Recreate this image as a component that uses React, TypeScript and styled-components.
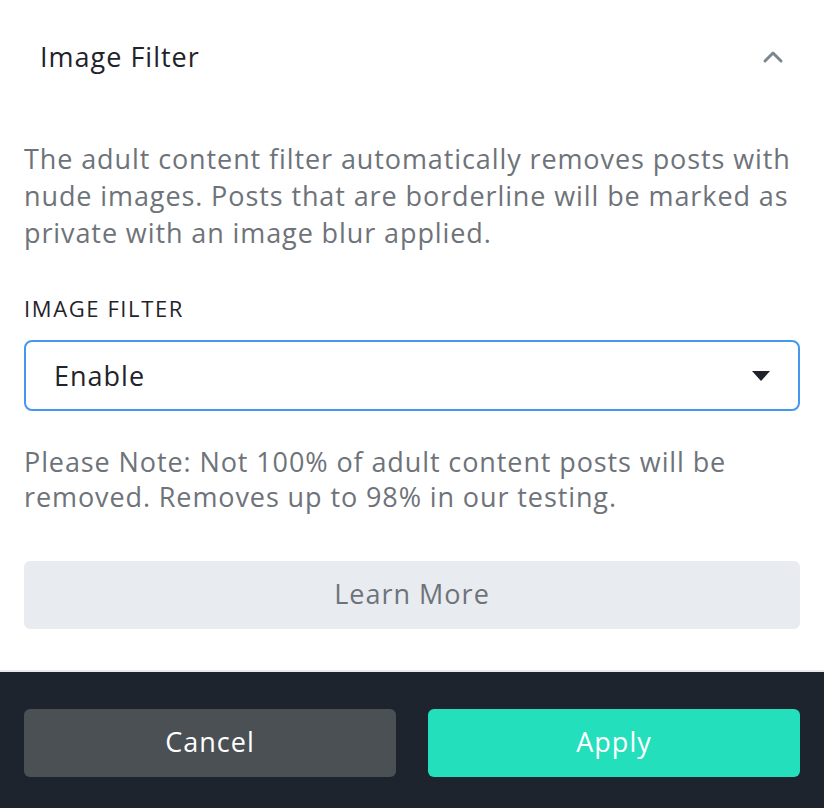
import React from 'react';
import styled, { createGlobalStyle } from 'styled-components';

const GlobalStyle = createGlobalStyle`
  html, body {
    margin: 0;
    padding: 0;
    background: #ffffff;
  }
  body {
    font-family: 'Open Sans', 'Liberation Sans', sans-serif;
  }
`;

const Panel = styled.div`
  width: 824px;
  height: 808px;
  display: flex;
  flex-direction: column;
  background: #ffffff;
`;

const Header = styled.div`
  display: flex;
  align-items: center;
  justify-content: space-between;
  height: 114px;
  padding: 0 40px 0 40px;
  box-sizing: border-box;
`;

const HeaderTitle = styled.h2`
  margin: 0 0 2px 0;
  font-size: 27px;
  font-weight: 500;
  color: #1f232a;
  letter-spacing: 1px;
`;

const Body = styled.div`
  flex: 1;
  padding: 26px 24px 0 24px;
  display: flex;
  flex-direction: column;
  border-bottom: 2px solid #e6e9ed;
`;

const Paragraph = styled.p<{ $lh: number }>`
  margin: 0;
  font-size: 27px;
  line-height: ${(p) => p.$lh}px;
  color: #6e737a;
  letter-spacing: 0.9px;
`;

const Label = styled.div`
  margin-top: 42px;
  font-size: 22px;
  font-weight: 500;
  color: #1f232a;
  letter-spacing: 1.6px;
`;

const Select = styled.div`
  margin-top: 17px;
  height: 71px;
  box-sizing: border-box;
  border: 2px solid #4597ef;
  border-radius: 8px;
  display: flex;
  align-items: center;
  justify-content: space-between;
  padding: 0 28px 0 28px;
  font-size: 27px;
  color: #1f232a;
  letter-spacing: 1px;
`;

const Note = styled(Paragraph)`
  margin-top: 33px;
`;

const LearnMore = styled.button`
  margin-top: 47px;
  height: 68px;
  padding: 0 0 3px 0;
  border: none;
  border-radius: 6px;
  background: #e8ebef;
  color: #6e737a;
  font-family: inherit;
  font-size: 27px;
  letter-spacing: 1px;
  cursor: pointer;
`;

const Footer = styled.div`
  height: 136px;
  background: #1e242d;
  display: grid;
  grid-template-columns: 1fr 1fr;
  gap: 32px;
  padding: 37px 24px 0 24px;
  box-sizing: border-box;
`;

const ActionButton = styled.button<{ $primary?: boolean }>`
  height: 68px;
  padding: 0 0 4px 0;
  border: none;
  border-radius: 6px;
  background: ${(p) => (p.$primary ? '#23dfbb' : '#4b5055')};
  color: #ffffff;
  font-family: inherit;
  font-size: 27px;
  font-weight: 500;
  letter-spacing: 1px;
  cursor: pointer;
`;

const ChevronUp = () => (
  <svg width="22" height="14" viewBox="0 0 22 14" fill="none">
    <path d="M3 11 L11 3 L19 11" stroke="#7b878e" strokeWidth="3" strokeLinecap="round" strokeLinejoin="round" />
  </svg>
);

const Caret = () => (
  <svg width="18" height="10" viewBox="0 0 18 10">
    <path d="M0 0 H18 L9 10 Z" fill="#1f232a" />
  </svg>
);

const App: React.FC = () => {
  return (
    <>
      <GlobalStyle />
      <Panel>
        <Header>
          <HeaderTitle>Image Filter</HeaderTitle>
          <ChevronUp />
        </Header>
        <Body>
          <Paragraph $lh={37}>
            The adult content filter automatically removes posts with nude images. Posts that are
            borderline will be marked as private with an image blur applied.
          </Paragraph>
          <Label>IMAGE FILTER</Label>
          <Select>
            <span>Enable</span>
            <Caret />
          </Select>
          <Note $lh={35}>
            Please Note: Not 100% of adult content posts will be removed. Removes up to 98% in our
            testing.
          </Note>
          <LearnMore>Learn More</LearnMore>
        </Body>
        <Footer>
          <ActionButton>Cancel</ActionButton>
          <ActionButton $primary>Apply</ActionButton>
        </Footer>
      </Panel>
    </>
  );
};

export default App;
